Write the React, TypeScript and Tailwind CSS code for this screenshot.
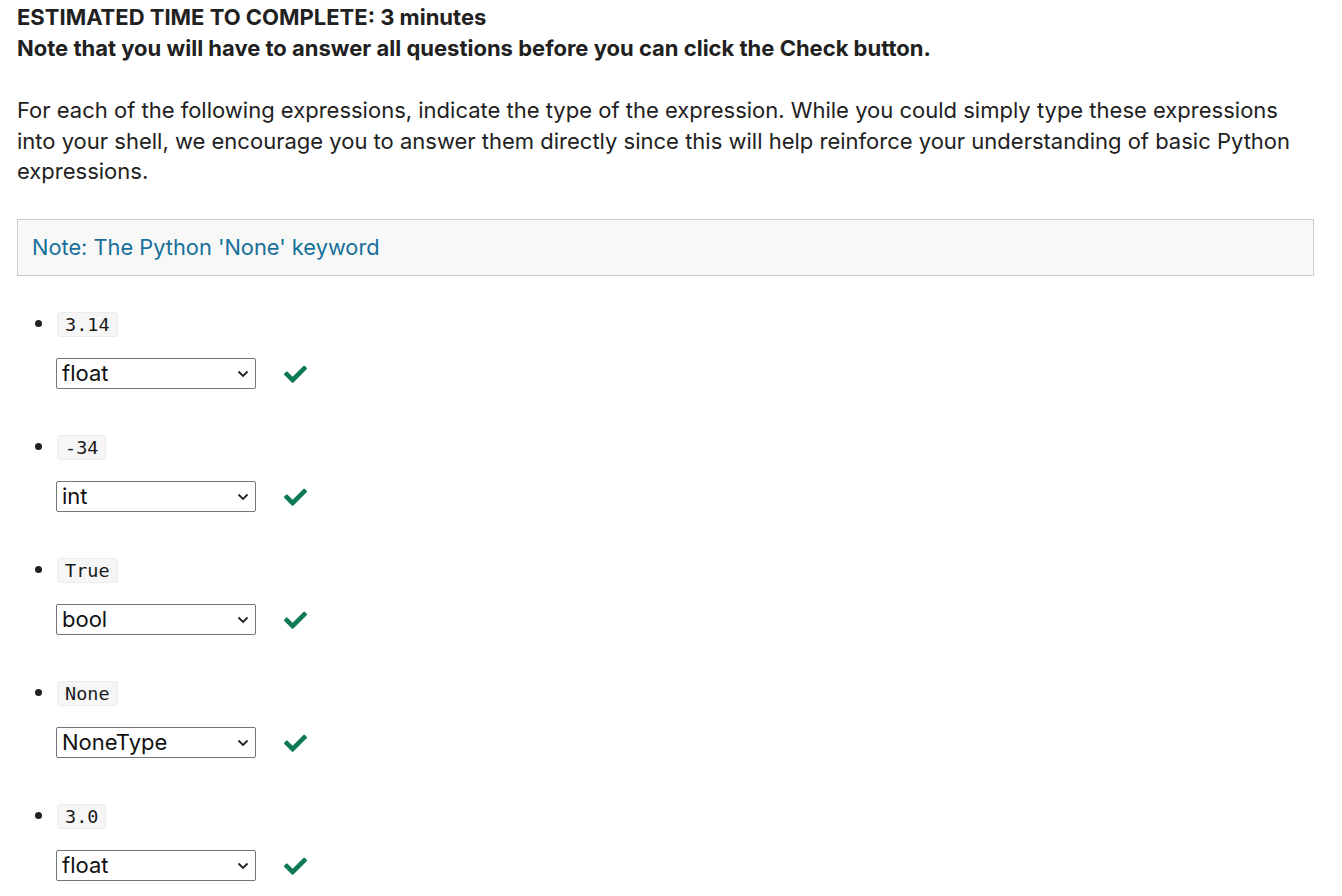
import React from 'react';

const items = [
  { expr: '3.14', answer: 'float' },
  { expr: '-34', answer: 'int' },
  { expr: 'True', answer: 'bool' },
  { expr: 'None', answer: 'NoneType' },
  { expr: '3.0', answer: 'float' },
];

const options = ['float', 'int', 'bool', 'str', 'NoneType'];

function Check() {
  return (
    <svg width="23" height="19" viewBox="0 0 512 420" className="text-[#0e7a54]" fill="currentColor">
      <path d="M173.9 410.2 7.5 243.8c-10-10-10-26.2 0-36.2l36.2-36.2c10-10 26.2-10 36.2 0L192 283.6 432.1 43.5c10-10 26.2-10 36.2 0l36.2 36.2c10 10 10 26.2 0 36.2L210.1 410.2c-10 10-26.2 10-36.2 0z" />
    </svg>
  );
}

function Chevron() {
  return (
    <svg width="12" height="8" viewBox="0 0 12 8" className="pointer-events-none absolute right-[7px] top-[12px]">
      <path d="M1.5 1.5 6 6l4.5-4.5" fill="none" stroke="#222" strokeWidth="1.8" />
    </svg>
  );
}

export default function App() {
  return (
    <div className="min-h-screen bg-white pl-[17px] pr-[28px] pt-[2px] text-[22px] text-[#212121] font-['Inter','Liberation_Sans',sans-serif]">
      <p className="font-bold leading-[31px]">ESTIMATED TIME TO COMPLETE: 3 minutes</p>
      <p className="font-bold leading-[31px]">Note that you will have to answer all questions before you can click the Check button.</p>

      <p className="mt-[31px] leading-[30.5px]">
        For each of the following expressions, indicate the type of the expression. While you could simply type these expressions
        into your shell, we encourage you to answer them directly since this will help reinforce your understanding of basic Python
        expressions.
      </p>

      <div className="mt-[32px] border border-[#cccccc] bg-[#f8f8f8] px-[14px] py-[12px] text-[21.8px] leading-[31px] text-[#17709a]">
        Note: The Python 'None' keyword
      </div>

      <ul className="mt-[32px] list-disc pl-[39px]">
        {items.map((item) => (
          <li key={item.expr} className="mb-[41.5px] leading-[31px] marker:text-[#212121]">
            <code className="ml-[1px] rounded-[3px] border border-[#ececec] bg-[#f6f6f6] px-[7px] py-[1px] text-[18.5px] leading-[23px] text-[#1a1a1a] font-['DejaVu_Sans_Mono',monospace]">
              {item.expr}
            </code>
            <div className="mt-[19.5px] flex items-center gap-[28px]">
              <div className="relative h-[31px] w-[200px]">
                <select
                  defaultValue={item.answer}
                  className="h-full w-full appearance-none rounded-[2px] border border-[#767676] bg-white pl-[5px] text-[22px] leading-[29px] text-[#111] font-['Inter','Liberation_Sans',sans-serif]"
                >
                  {options.map((o) => (
                    <option key={o} value={o}>
                      {o}
                    </option>
                  ))}
                </select>
                <Chevron />
              </div>
              <Check />
            </div>
          </li>
        ))}
      </ul>
    </div>
  );
}
